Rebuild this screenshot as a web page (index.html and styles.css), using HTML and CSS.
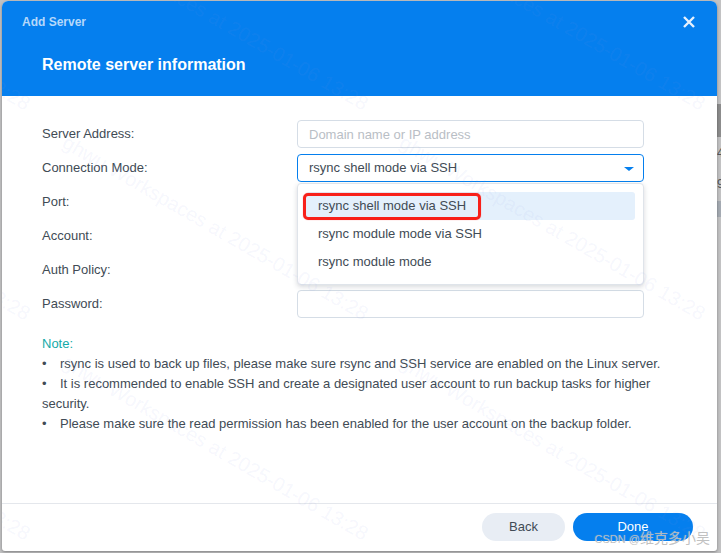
FILE: index.html
```html
<!DOCTYPE html>
<html lang="en">
<head>
<meta charset="utf-8">
<title>Add Server</title>
<link rel="stylesheet" href="styles.css">
</head>
<body>
<div class="backdrop">
  <div class="bg-band b1"></div>
  <div class="bg-band b2"></div>
  <div class="bg-text t1">47</div>
  <div class="bg-text t2">97</div>
  <div class="dialog">
    <header class="head">
      <div class="head-top">
        <span class="head-title">Add Server</span>
        <svg class="close" width="12" height="12" viewBox="0 0 12 12"><path d="M1 1L11 11M11 1L1 11" stroke="#e6f1fd" stroke-width="2.4" fill="none"/></svg>
      </div>
      <h1 class="head-sub">Remote server information</h1>
    </header>
    <main class="body">
      <div class="form">
        <div class="row"><label class="lab">Server Address:</label><div class="input placeholder">Domain name or IP address</div></div>
        <div class="row"><label class="lab">Connection Mode:</label><div class="input focus">rsync shell mode via SSH<span class="caret"></span></div></div>
        <div class="row"><label class="lab">Port:</label><div class="input"></div></div>
        <div class="row"><label class="lab">Account:</label><div class="input"></div></div>
        <div class="row"><label class="lab">Auth Policy:</label><div class="input"></div></div>
        <div class="row"><label class="lab">Password:</label><div class="input"></div></div>
      </div>
      <div class="note">
        <div class="note-head">Note:</div>
        <div class="bullet"><span class="dot">•</span>rsync is used to back up files, please make sure rsync and SSH service are enabled on the Linux server.</div>
        <div class="bullet"><span class="dot">•</span>It is recommended to enable SSH and create a designated user account to run backup tasks for higher security.</div>
        <div class="bullet"><span class="dot">•</span>Please make sure the read permission has been enabled for the user account on the backup folder.</div>
      </div>
      <div class="menu">
        <div class="opt sel">rsync shell mode via SSH</div>
        <div class="opt">rsync module mode via SSH</div>
        <div class="opt">rsync module mode</div>
      </div>
      <div class="mark"></div>
    </main>
    <footer class="foot">
      <button class="btn back">Back</button>
      <button class="btn done">Done</button>
    </footer>
    <div class="wm c1 r1">ghwu Workspaces at 2025-01-06 13:28</div>
    <div class="wm c2 r1">ghwu Workspaces at 2025-01-06 13:28</div>
    <div class="wm c3 r1">ghwu Workspaces at 2025-01-06 13:28</div>
    <div class="wm c1 r2">ghwu Workspaces at 2025-01-06 13:28</div>
    <div class="wm c2 r2">ghwu Workspaces at 2025-01-06 13:28</div>
    <div class="wm c3 r2">ghwu Workspaces at 2025-01-06 13:28</div>
    <div class="wm c1 r3">ghwu Workspaces at 2025-01-06 13:28</div>
    <div class="wm c2 r3">ghwu Workspaces at 2025-01-06 13:28</div>
    <div class="wm c3 r3">ghwu Workspaces at 2025-01-06 13:28</div>
  </div>
  <div class="csdn"><span class="csdn-latin">CSDN @</span>维克多小吴</div>
</div>
</body>
</html>
```
FILE: styles.css
```css
* { box-sizing: border-box; }
html, body { margin: 0; height: 100%; }
body { font-family: "Liberation Sans", Arial, sans-serif; color: #414b55; overflow: hidden; }
.backdrop { position: relative; width: 721px; height: 553px; background: #c2c2c3; padding: 1px 4px 2px 2px; overflow: hidden; }
.bg-band { position: absolute; right: 0; width: 4px; }
.b1 { top: 104px; height: 33px; background: #8c8c8c; }
.b2 { top: 201px; height: 16px; background: #a4aab2; }
.bg-text { position: absolute; left: 717px; font-size: 12px; color: #55585c; }
.t1 { top: 146px; }
.t2 { top: 177px; }
.dialog { position: relative; width: 715px; height: 550px; background: #fff; border-radius: 6px 6px 3px 3px; overflow: hidden; display: flex; flex-direction: column; box-shadow: 0 1px 3px rgba(0,0,0,.35); }
.head { height: 95px; background: #057fee; color: #fff; padding: 0 40px; flex: none; }
.head-top { display: flex; justify-content: space-between; align-items: center; height: 40px; margin-left: -20px; margin-right: -20px; padding: 1px 2px 0 0; }
.head-title { font-size: 12px; font-weight: 700; color: #b5d8fa; }
.head-sub { margin: 5px 0 0; font-size: 16px; line-height: 38px; font-weight: 700; }
.body { position: relative; flex: 1; padding: 24px 40px 0; }
.form { display: flex; flex-direction: column; gap: 6px; }
.row { display: flex; height: 28px; }
.lab { width: 255px; font-size: 13px; line-height: 28px; }
.input { position: relative; width: 347px; height: 28px; border: 1px solid #d5dde6; border-radius: 4px; font-size: 13px; line-height: 26px; padding: 0 11px; }
.placeholder { color: #b9bec5; line-height: 28px; }
.focus { border-color: #057fee; }
.caret { position: absolute; right: 9px; top: 12px; width: 0; height: 0; border-left: 5px solid transparent; border-right: 5px solid transparent; border-top: 4px solid #057fee; }
.note { margin-top: 16px; font-size: 13px; line-height: 20px; }
.note-head { color: #14aaa8; }
.dot { display: inline-block; width: 18px; }
.menu { position: absolute; left: 295px; top: 87px; width: 347px; height: 102px; background: #fff; border: 1px solid #dfe4ea; border-radius: 4px; box-shadow: 0 2px 5px rgba(60,70,85,.2); padding: 8px; font-size: 13px; }
.opt { height: 28px; line-height: 28px; padding-left: 12px; width: 329px; }
.sel { background: #e4f0fc; border-radius: 3px; }
.mark { position: absolute; left: 301px; top: 97px; width: 178px; height: 27px; border: 3px solid #f8201a; border-radius: 5px; box-shadow: 0 0 1px rgba(248,32,26,.6); }
.foot { height: 48px; flex: none; border-top: 1px solid #e4e7ec; display: flex; justify-content: flex-end; gap: 8px; padding: 9px 24px 0 0; }
.btn { width: 83px; height: 28px; border: 0; border-radius: 14px; font-family: inherit; font-size: 13px; padding: 0 0 2px; }
.back { background: #e8edf4; color: #414b55; }
.done { width: 120px; background: #057fee; color: #fff; }
.wm { position: absolute; white-space: nowrap; font-size: 20px; color: rgba(140,150,235,.085); transform: rotate(30deg); transform-origin: 0 0; pointer-events: none; }
.c1 { left: -270px; }
.c2 { left: 68px; }
.c3 { left: 405px; }
.r1 { top: -80px; }
.r2 { top: 130px; }
.r3 { top: 350px; }
.csdn { position: absolute; right: 11px; bottom: 5px; font-family: "Liberation Sans", "Noto Sans CJK SC", sans-serif; font-size: 14px; line-height: 18px; color: rgba(185,185,185,.9); text-shadow: 0 0 1px rgba(255,255,255,.5); }
.csdn-latin { font-size: 11px; }
```
